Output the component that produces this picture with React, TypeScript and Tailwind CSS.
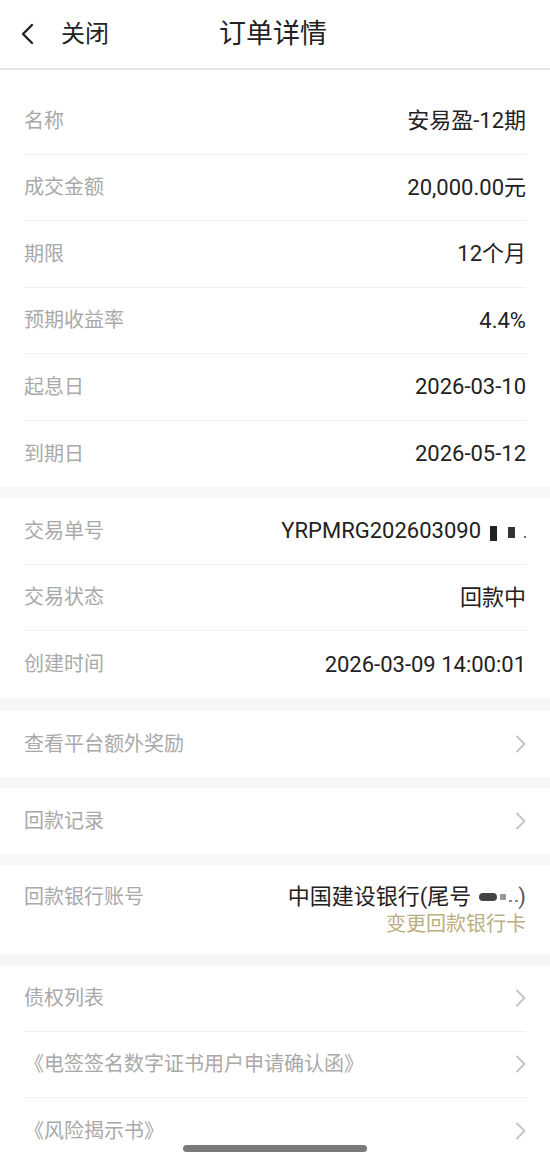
import React from "react";

const font = { fontFamily: '"Roboto", "Noto Sans CJK SC", sans-serif' };

const Chevron = () => (
  <svg width="14" height="20" viewBox="0 0 14 20" fill="none" className="-mr-[2px] shrink-0">
    <path d="M3 2.5l7.5 7.5L3 17.5" stroke="#c6c6c6" strokeWidth="2" strokeLinecap="round" strokeLinejoin="round" />
  </svg>
);

const Row = ({ label, value, last }: { label: string; value: React.ReactNode; last?: boolean }) => (
  <div className={`mx-6 flex h-[66.5px] items-center justify-between ${last ? "" : "border-b border-[#f0f0f0]"}`}>
    <span className="text-[20px] text-[#a9a9a9]">{label}</span>
    <span className="text-[22px] text-[#222]">{value}</span>
  </div>
);

const LinkRow = ({ label, last }: { label: string; last?: boolean }) => (
  <div className={`mx-6 flex h-[66px] items-center justify-between ${last ? "" : "border-b border-[#f0f0f0]"}`}>
    <span className="text-[20px] text-[#a9a9a9]">{label}</span>
    <Chevron />
  </div>
);

export default function App() {
  return (
    <div className="relative h-[1163px] w-[550px] overflow-hidden bg-[#f7f7f7]" style={font}>
      <header className="flex h-[70px] items-center border-b-2 border-[#e4e4e4] bg-white">
        <div className="flex w-[130px] items-center pl-5">
          <svg width="14" height="22" viewBox="0 0 14 22" fill="none">
            <path d="M12 2L3 11l9 9" stroke="#222" strokeWidth="2.4" strokeLinecap="round" strokeLinejoin="round" />
          </svg>
          <span className="ml-[27px] text-[24px] text-[#222]">关闭</span>
        </div>
        <h1 className="ml-[89px] text-[27px] text-[#222]">订单详情</h1>
      </header>

      <section className="bg-white pt-[18px]">
        <Row label="名称" value="安易盈-12期" />
        <Row label="成交金额" value="20,000.00元" />
        <Row label="期限" value="12个月" />
        <Row label="预期收益率" value="4.4%" />
        <Row label="起息日" value="2026-03-10" />
        <Row label="到期日" value="2026-05-12" last />
      </section>

      <section className="mt-[11px] bg-white">
        <Row
          label="交易单号"
          value={
            <span className="flex items-center">
              YRPMRG20260309<span className="-mr-[3px]">0</span>
              <span className="ml-3 inline-block h-[15px] w-[7px] translate-y-[3px] bg-[#222]" />
              <span className="ml-[11px] inline-block h-[11px] w-[7px] translate-y-[2px] bg-[#333]" />
              <span className="ml-[9px] inline-block h-[2px] w-[2px] translate-y-[6px] bg-[#666]" />
            </span>
          }
        />
        <Row label="交易状态" value="回款中" />
        <Row label="创建时间" value="2026-03-09 14:00:01" last />
      </section>

      <section className="mt-[13px] bg-white">
        <LinkRow label="查看平台额外奖励" last />
      </section>

      <section className="mt-[11px] bg-white">
        <LinkRow label="回款记录" last />
      </section>

      <section className="mt-[11px] flex h-[89px] justify-between bg-white px-6 pt-[18px]">
        <span className="text-[20px] leading-[28px] text-[#a9a9a9]">回款银行账号</span>
        <div className="flex flex-col items-end">
          <span className="flex items-center text-[22px] leading-[28px] text-[#222]">
            中国建设银行(尾号
            <span className="ml-2 inline-block h-[8px] w-[18px] rounded-sm bg-[#444]" />
            <span className="ml-[3px] inline-block h-[6px] w-[6px] bg-[#999]" />
            <span className="ml-[3px] inline-block h-[2px] w-[3px] translate-y-[4px] bg-[#888]" />
            <span className="ml-[3px] inline-block h-[2px] w-[3px] translate-y-[4px] bg-[#888]" />
            <span className="text-[#555]">)</span>
          </span>
          <span className="text-[20px] leading-[26px] text-[#bcae80]">变更回款银行卡</span>
        </div>
      </section>

      <section className="mt-[12px] bg-white">
        <LinkRow label="债权列表" />
        <LinkRow label="《电签签名数字证书用户申请确认函》" />
        <LinkRow label="《风险揭示书》" last />
      </section>

      <div className="absolute bottom-[11px] left-[183px] h-[7px] w-[184px] rounded-full bg-[#7a7a7a]" />
    </div>
  );
}
